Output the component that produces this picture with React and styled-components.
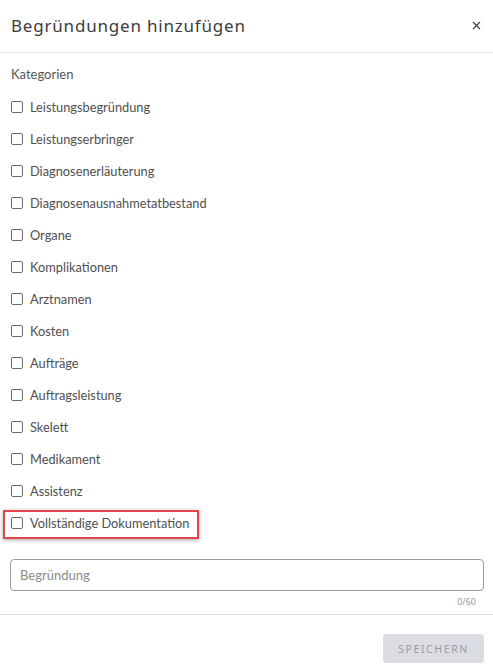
import React from 'react'
import styled, { createGlobalStyle } from 'styled-components';

const GlobalStyle = createGlobalStyle`
  html, body {
    margin: 0;
    padding: 0;
    background: #ffffff;
  }
  * {
    box-sizing: border-box;
  }
`;

const Dialog = styled.div`
  width: 493px;
  height: 670px;
  background: #ffffff;
  display: flex;
  flex-direction: column;
  font-family: Lato, "Liberation Sans", sans-serif;
  color: #333;
`;

const Header = styled.div`
  height: 53px;
  display: flex;
  align-items: center;
  justify-content: space-between;
  padding: 0 10px 2px 11px;
  border-bottom: 1px solid #e2e2e2;
`;

const Title = styled.h1`
  margin: 0;
  font-family: "Noto Sans", sans-serif;
  font-size: 17px;
  font-weight: 400;
  color: #3c3c3c;
  letter-spacing: 0.8px;
`;

const CloseButton = styled.button`
  border: none;
  background: none;
  padding: 0;
  width: 14px;
  height: 14px;
  display: flex;
  align-items: center;
  justify-content: center;
  cursor: pointer;
`;

const Body = styled.div`
  padding: 11px 9px 0 10px;
  display: flex;
  flex-direction: column;
`;

const SectionLabel = styled.div`
  font-size: 13px;
  line-height: 20px;
  color: #555;
  padding-left: 1px;
  margin-bottom: 7px;
`;

const List = styled.div`
  display: flex;
  flex-direction: column;
`;

const Row = styled.label`
  position: relative;
  height: 32px;
  display: flex;
  align-items: center;
  gap: 7px;
  padding-left: 1px;
  font-size: 12.8px;
  color: #505050;
  cursor: pointer;
  align-self: flex-start;

  &::after {
    content: '';
    display: ${p => (p.$highlighted ? 'block' : 'none')};
    position: absolute;
    left: -7px;
    right: -10px;
    top: 3px;
    bottom: 0px;
    border: 2px solid #e0464b;
    box-shadow: 0 1px 4px rgba(0, 0, 0, 0.35);
    pointer-events: none;
  }
`;

const Box = styled.span`
  width: 12px;
  height: 12px;
  border: 1px solid #6a6a6a;
  border-radius: 2px;
  background: #fff;
  flex-shrink: 0;
`;

const Field = styled.div`
  margin-top: 20px;
  display: flex;
  flex-direction: column;
`;

const Input = styled.input`
  width: 474px;
  height: 32px;
  border: 1px solid #9c9c9c;
  border-radius: 4px;
  padding: 0 9px;
  font-family: Lato, "Liberation Sans", sans-serif;
  font-size: 13px;
  color: #333;
  outline: none;

  &::placeholder {
    color: #8a8a8a;
  }
`;

const Counter = styled.div`
  align-self: flex-end;
  margin: 5px 8px 0 0;
  font-family: "Noto Sans", sans-serif;
  font-size: 9px;
  line-height: 12px;
  color: #9a9a9a;
`;

const Footer = styled.div`
  margin-top: 6px;
  border-top: 1px solid #e2e2e2;
  padding: 19px 9px 0 0;
  display: flex;
  justify-content: flex-end;
`;

const SaveButton = styled.button`
  width: 101px;
  height: 29px;
  border: none;
  border-radius: 3px;
  background: #dcdde3;
  color: #9b9ca6;
  font-family: "Noto Sans", sans-serif;
  font-size: 10.5px;
  letter-spacing: 1.6px;
  text-transform: uppercase;
  padding: 0;
`;

const categories = [
  'Leistungsbegründung',
  'Leistungserbringer',
  'Diagnosenerläuterung',
  'Diagnosenausnahmetatbestand',
  'Organe',
  'Komplikationen',
  'Arztnamen',
  'Kosten',
  'Aufträge',
  'Auftragsleistung',
  'Skelett',
  'Medikament',
  'Assistenz',
  'Vollständige Dokumentation',
];

const App = () => {
  return (
    <>
      <GlobalStyle />
      <Dialog>
        <Header>
          <Title>Begründungen hinzufügen</Title>
          <CloseButton aria-label="close">
            <svg width="9" height="9" viewBox="0 0 9 9">
              <path d="M1 1 L8 8 M8 1 L1 8" stroke="#444" strokeWidth="1.2" fill="none" />
            </svg>
          </CloseButton>
        </Header>
        <Body>
          <SectionLabel>Kategorien</SectionLabel>
          <List>
            {categories.map((c, i) => (
              <Row key={c} $highlighted={i === categories.length - 1}>
                <Box />
                {c}
              </Row>
            ))}
          </List>
          <Field>
            <Input placeholder="Begründung" />
            <Counter>0/60</Counter>
          </Field>
        </Body>
        <Footer>
          <SaveButton>Speichern</SaveButton>
        </Footer>
      </Dialog>
    </>
  )
}

export default App
